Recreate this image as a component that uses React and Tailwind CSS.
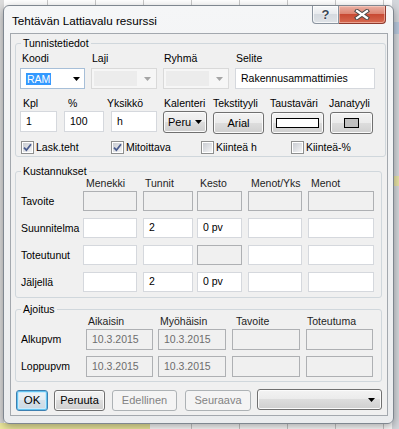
import React from 'react';

const boxBase = 'h-full border flex items-center whitespace-nowrap overflow-hidden';
const boxEnabled = 'bg-white border-[#d5d8dd] text-black';
const boxDisabled = 'bg-[#f0f0f0] border-[#aeb0b3] text-[#6d6d6d]';
const btnNormal = 'border border-[#707070] rounded-[3px] bg-[linear-gradient(#f3f3f3,#ebebeb_50%,#dddddd_50%,#cfcfcf)] shadow-[inset_0_0_0_1px_#fbfbfb] flex items-center justify-center';
const btnDisabled = 'border border-[#adb2b5] rounded-[3px] bg-[#f4f4f4] text-[#838383] flex items-center justify-center';

function Box({ className = '', disabled = false, children }) {
  return (
    <div className={`${boxBase} ${disabled ? boxDisabled : boxEnabled} pl-[5px] ${className}`}>{children}</div>
  );
}

function Arrow({ color = '#000' }) {
  return (
    <svg width="7" height="4" viewBox="0 0 7 4">
      <path d="M0 0h7L3.5 4z" fill={color} />
    </svg>
  );
}

function CheckBox({ checked, label }) {
  return (
    <div className="w-[90px] flex items-center gap-[2px] h-[13px]">
      <div className="w-[13px] h-[13px] border border-[#8e8f8f] bg-white p-[1px] shrink-0">
        <div className="w-full h-full bg-[linear-gradient(135deg,#c9ccd2,#f4f4f5)] flex items-center justify-center">
          {checked && (
            <svg width="9" height="9" viewBox="0 0 9 9">
              <path d="M1 4.6L3.4 7.2L8 1.2" fill="none" stroke="#4a5c8f" strokeWidth="1.8" />
            </svg>
          )}
        </div>
      </div>
      <span className="leading-[13px] whitespace-nowrap">{label}</span>
    </div>
  );
}

function Group({ title, className = '', children }) {
  return (
    <fieldset className={`ml-[4px] w-[367px] border border-[#d0d7dc] rounded-[3px] ${className}`}>
      <legend className="ml-[5px] px-[2px] leading-[11px] h-[11px]">{title}</legend>
      {children}
    </fieldset>
  );
}

function Background() {
  return (
    <div className="absolute inset-0 bg-white">
      <div className="absolute inset-0 bg-[repeating-linear-gradient(90deg,transparent_0_47px,#c9c9c9_47px_48px)]" />
      <div className="absolute inset-0 bg-[repeating-linear-gradient(180deg,transparent_0_18px,#cfcfcf_18px_19px)]" />
      <div className="absolute left-0 top-0 w-[4px] h-full bg-[#dcdcdc]" />
      <div className="absolute left-0 bottom-0 w-[150px] h-[6px] bg-[#efeb9f]" />
      <div className="absolute right-0 top-0 w-[7px] h-full bg-[#d4d7dc]" />
      <div className="absolute right-0 top-[22px] w-[7px] h-[12px] bg-[#b9c9de]" />
      <div className="absolute right-0 top-[176px] w-[7px] h-[10px] bg-[#e8e3a6]" />
    </div>
  );
}

export default function App() {
  return (
    <div className="relative w-[399px] h-[429px] overflow-hidden font-['Liberation_Sans',Arial,sans-serif] text-[10.5px] text-black">
      <Background />
      <div className="absolute left-[3px] top-[5px] w-[391px] h-[419px] rounded-[6px] border border-[#7f8790] bg-[linear-gradient(#f5f6f7,#eaecee)] shadow-[0_3px_10px_rgba(0,0,0,0.35)] flex flex-col">
        {/* Title bar */}
        <div className="h-[27px] flex justify-between items-start shrink-0">
          <div className="pl-[8px] pt-[7px] text-[11.7px] leading-[15px] whitespace-nowrap">Tehtävän Lattiavalu resurssi</div>
          <div className="flex mr-[7px] h-[18px]">
            <div className="w-[27px] h-full border border-t-0 border-[#8a949f] rounded-bl-[4px] bg-[linear-gradient(#f7f8f9,#e6e9ed_50%,#d5dae0_50%,#dfe3e7)] flex items-center justify-center shadow-[inset_0_0_0_1px_rgba(255,255,255,0.7)]">
              <span className="text-[13px] font-bold leading-none text-[#3a4654] [text-shadow:0_0_2px_#fff,0_0_1px_#fff]">?</span>
            </div>
            <div className="w-[47px] h-full border border-t-0 border-l-0 border-[#8e3a2e] rounded-br-[4px] bg-[linear-gradient(#eab0a3,#dd8775_45%,#c84a34_50%,#d76a50)] flex items-center justify-center shadow-[inset_0_0_0_1px_rgba(255,220,210,0.5)]">
              <svg width="16" height="11" viewBox="0 0 16 11">
                <path d="M3 2L13 9M13 2L3 9" stroke="#4a4a4a" strokeWidth="4.2" strokeLinecap="square" />
                <path d="M3 2L13 9M13 2L3 9" stroke="#ffffff" strokeWidth="2.2" strokeLinecap="square" />
              </svg>
            </div>
          </div>
        </div>

        {/* Client area */}
        <div className="ml-[6px] w-[378px] h-[383px] border border-[#a3a8ae] bg-[#f0f0f0] flex flex-col">
          {/* Tunnistetiedot */}
          <Group title="Tunnistetiedot" className="mt-[4px]">
            <div className="px-[4px] pt-[3px] pb-[2px] flex flex-col">
              <div className="flex pl-[2px] h-[13px] leading-[13px]">
                <span className="w-[70px]">Koodi</span>
                <span className="w-[72px]">Laji</span>
                <span className="w-[72px]">Ryhmä</span>
                <span>Selite</span>
              </div>
              <div className="flex mt-[3px] h-[21px]">
                <div className="w-[65px] h-full border border-[#a7bfd8] bg-white flex items-center pl-[5px] pr-[4px] justify-between">
                  <span className="bg-[#3399ff] text-white px-[1px] leading-[12px]">RAM</span>
                  <Arrow />
                </div>
                <div className="ml-[6px] w-[66px] h-full border border-[#d9d9d9] bg-[#f6f6f6] flex items-center p-[2px] pr-[5px]">
                  <div className="w-[43px] h-full bg-[#ececec]" />
                  <div className="ml-auto"><Arrow color="#a5a5a5" /></div>
                </div>
                <div className="ml-[6px] w-[66px] h-full border border-[#d9d9d9] bg-[#f6f6f6] flex items-center p-[2px] pr-[5px]">
                  <div className="w-[43px] h-full bg-[#ececec]" />
                  <div className="ml-auto"><Arrow color="#a5a5a5" /></div>
                </div>
                <div className="ml-[6px] w-[140px] h-full">
                  <Box>Rakennusammattimies</Box>
                </div>
              </div>
              <div className="flex pl-[3px] h-[13px] leading-[13px] mt-[8px] whitespace-nowrap">
                <span className="w-[45px]">Kpl</span>
                <span className="w-[39px]">%</span>
                <span className="w-[57px]">Yksikkö</span>
                <span className="w-[49px]">Kalenteri</span>
                <span className="w-[57px]">Tekstityyli</span>
                <span className="w-[59px]">Taustaväri</span>
                <span>Janatyyli</span>
              </div>
              <div className="flex items-start mt-[1px] h-[23px]">
                <div className="w-[37px] h-[21px]"><Box>1</Box></div>
                <div className="ml-[7px] w-[40px] h-[21px]"><Box>100</Box></div>
                <div className="ml-[7px] w-[46px] h-[21px]"><Box>h</Box></div>
                <div className={`ml-[6px] w-[44px] h-[22px] ${btnNormal} justify-between! pl-[4px] pr-[4px]`}>
                  <span className="text-[11px]">Peru</span>
                  <Arrow />
                </div>
                <div className={`ml-[6px] w-[51px] h-[22px] mt-[1px] ${btnNormal} text-[11px]`}>Arial</div>
                <div className={`ml-[7px] w-[53px] h-[22px] mt-[1px] ${btnNormal}`}>
                  <div className="w-[43px] h-[10px] border border-black bg-white" />
                </div>
                <div className={`ml-[6px] w-[43px] h-[22px] mt-[1px] ${btnNormal}`}>
                  <div className="w-[15px] h-[10px] border border-black bg-[#c0c0c0]" />
                </div>
              </div>
              <div className="flex pl-[1px] mt-[7px]">
                <CheckBox checked label="Lask.teht" />
                <CheckBox checked label="Mitoittava" />
                <CheckBox label="Kiinteä h" />
                <CheckBox label="Kiinteä-%" />
              </div>
            </div>
          </Group>

          {/* Kustannukset */}
          <Group title="Kustannukset" className="mt-[9px]">
            <div className="px-[4px] pb-[5px] flex flex-col">
              <div className="flex h-[13px] leading-[13px] text-[#1e1e1e] whitespace-nowrap">
                <span className="w-[63px]" />
                <span className="w-[54px] pl-[3px]">Menekki</span>
                <span className="ml-[6px] w-[50px] pl-[2px]">Tunnit</span>
                <span className="ml-[4px] w-[45px] pl-[3px]">Kesto</span>
                <span className="ml-[6px] w-[54px] pl-[3px]">Menot/Yks</span>
                <span className="ml-[6px] w-[66px] pl-[3px]">Menot</span>
              </div>
              <div className="flex flex-col gap-[7px] mt-[1px]">
                {[
                  { label: 'Tavoite', vals: ['', '', '', '', ''], dis: [1, 1, 1, 1, 1] },
                  { label: 'Suunnitelma', vals: ['', '2', '0 pv', '', ''], dis: [0, 0, 0, 0, 0] },
                  { label: 'Toteutunut', vals: ['', '', '', '', ''], dis: [0, 0, 1, 0, 0] },
                  { label: 'Jäljellä', vals: ['', '2', '0 pv', '', ''], dis: [0, 0, 0, 0, 0] },
                ].map((r) => (
                  <div key={r.label} className="flex h-[20px]">
                    <span className="w-[63px] pl-[1px] self-center leading-[13px]">{r.label}</span>
                    <div className="w-[54px] h-full"><Box disabled={!!r.dis[0]}>{r.vals[0]}</Box></div>
                    <div className="ml-[6px] w-[50px] h-full"><Box disabled={!!r.dis[1]}>{r.vals[1]}</Box></div>
                    <div className="ml-[4px] w-[45px] h-full"><Box disabled={!!r.dis[2]}>{r.vals[2]}</Box></div>
                    <div className="ml-[6px] w-[54px] h-full"><Box disabled={!!r.dis[3]}>{r.vals[3]}</Box></div>
                    <div className="ml-[6px] w-[66px] h-full"><Box disabled={!!r.dis[4]}>{r.vals[4]}</Box></div>
                  </div>
                ))}
              </div>
            </div>
          </Group>

          {/* Ajoitus */}
          <Group title="Ajoitus" className="mt-[6px]">
            <div className="px-[4px] pb-[4px] flex flex-col">
              <div className="flex h-[13px] leading-[13px] text-[#1e1e1e] whitespace-nowrap">
                <span className="w-[66px]" />
                <span className="w-[67px] pl-[2px]">Aikaisin</span>
                <span className="ml-[5px] w-[68px] pl-[2px]">Myöhäisin</span>
                <span className="ml-[6px] w-[68px] pl-[4px]">Tavoite</span>
                <span className="ml-[6px] w-[67px] pl-[1px]">Toteutuma</span>
              </div>
              <div className="flex flex-col gap-[6px] mt-[1px]">
                {['Alkupvm', 'Loppupvm'].map((l) => (
                  <div key={l} className="flex h-[21px]">
                    <span className="w-[66px] pl-[1px] self-center leading-[13px]">{l}</span>
                    <div className="w-[67px] h-full"><Box disabled>10.3.2015</Box></div>
                    <div className="ml-[5px] w-[68px] h-full"><Box disabled>10.3.2015</Box></div>
                    <div className="ml-[6px] w-[68px] h-full"><Box disabled /></div>
                    <div className="ml-[6px] w-[67px] h-full"><Box disabled /></div>
                  </div>
                ))}
              </div>
            </div>
          </Group>

          {/* Buttons */}
          <div className="flex pl-[5px] mt-[8px] h-[21px]">
            <div className="w-[32px] h-full border border-[#3c7fb1] rounded-[3px] bg-[linear-gradient(#eef4f8,#e3ecf2_50%,#d4e0e9_50%,#cbd8e2)] shadow-[inset_0_0_0_1px_#64c3ef,inset_0_0_0_2px_#c9eafb] flex items-center justify-center text-[11.5px]">OK</div>
            <div className={`ml-[6px] w-[51px] h-full ${btnNormal} text-[11px]`}>Peruuta</div>
            <div className={`ml-[7px] w-[65px] h-full ${btnDisabled} text-[11px]`}>Edellinen</div>
            <div className={`ml-[8px] w-[66px] h-full ${btnDisabled} text-[11px]`}>Seuraava</div>
            <div className={`ml-[6px] w-[125px] h-[21px] -mt-[1px] ${btnNormal} justify-end! pr-[6px]`}>
              <Arrow />
            </div>
          </div>
        </div>
      </div>
    </div>
  );
}
